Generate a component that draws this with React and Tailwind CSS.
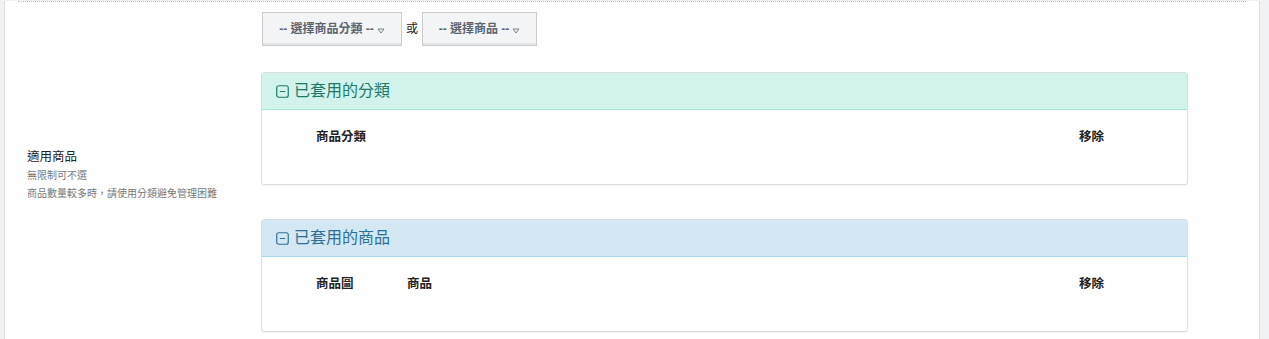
import { useState } from 'react';

const font = { fontFamily: '"Helvetica Neue", "Liberation Sans", "Noto Sans CJK TC", sans-serif' };

function SelectBox({ label, width }) {
  return (
    <div
      className={`${width} h-[34px] flex items-center justify-center gap-[3px] bg-[#f3f4f6] border border-[#c9cbce] shadow-[inset_0_-2px_0_#e2e4e7] text-[12px] font-semibold text-[#5b6570]`}
    >
      <span>{label}</span>
      <svg width="8" height="6" viewBox="0 0 8 6" className="mt-[3px]">
        <path d="M1 1 L7 1 L4 5 Z" fill="none" stroke="#6b7280" strokeWidth="0.9" />
      </svg>
    </div>
  );
}

function MinusBox({ color }) {
  return (
    <svg width="13" height="13" viewBox="0 0 13 13" className="shrink-0">
      <rect x="0.75" y="0.75" width="11.5" height="11.5" rx="2" fill="none" stroke={color} strokeWidth="1.2" />
      <path d="M3.8 6.5 H9.2" stroke={color} strokeWidth="1.2" />
    </svg>
  );
}

function Panel({ title, headBg, headBorder, titleColor, columns }) {
  return (
    <div className="w-[927px] border border-[#dadde1] rounded-[3px] bg-white shadow-[0_1px_1px_rgba(0,0,0,0.05)] overflow-hidden">
      <div className={`h-[37px] flex items-center gap-[5px] pl-[14px] border-b ${headBg} ${headBorder}`}>
        <MinusBox color={titleColor} />
        <span className="text-[16px]" style={{ color: titleColor }}>{title}</span>
      </div>
      <div className="h-[74px] flex pt-[18px] pl-[54px] pr-[83px] text-[12.5px] font-bold text-[#222]">
        <div className="flex-1 flex">
          {columns.map((c, i) => (
            <span key={c} className={i === 0 && columns.length > 1 ? 'w-[91px]' : ''}>{c}</span>
          ))}
        </div>
        <span>移除</span>
      </div>
    </div>
  );
}

export default function App() {
  const [open] = useState(true);

  return (
    <div className="w-[1269px] h-[339px] overflow-hidden bg-[#f1f2f4] pl-[4px] pr-[9px]" style={font}>
      <div className="h-full bg-white border-l border-r border-[#dcdde0] px-[13px]">
        <div className="mt-px border-t border-dotted border-[#bdbdbd]" />
        <div className="flex pt-[10px] pb-[15px]">
          <div className="w-[243px] pl-[9px] self-center pt-[6px]">
            <div className="text-[12.5px] text-[#222] leading-[16px]">適用商品</div>
            <div className="text-[10px] text-[#777] mt-[4px] leading-[14px]">無限制可不選</div>
            <div className="text-[10px] text-[#777] mt-[4px] leading-[14px]">商品數量較多時，請使用分類避免管理困難</div>
          </div>
          <div className="flex flex-col">
            <div className="flex items-center gap-[4px] pl-px">
              <SelectBox label="-- 選擇商品分類 --" width="w-[140px]" />
              <span className="text-[12px] text-[#222]">或</span>
              <SelectBox label="-- 選擇商品 --" width="w-[115px]" />
            </div>
            {open && (
              <div className="flex flex-col gap-[34px] mt-[26px]">
                <Panel
                  title="已套用的分類"
                  headBg="bg-[#d1f3ec]"
                  headBorder="border-[#a6e6d8]"
                  titleColor="#1d7a69"
                  columns={['商品分類']}
                />
                <Panel
                  title="已套用的商品"
                  headBg="bg-[#d3e8f3]"
                  headBorder="border-[#a9d9ea]"
                  titleColor="#2d6f97"
                  columns={['商品圖', '商品']}
                />
              </div>
            )}
          </div>
        </div>
      </div>
    </div>
  );
}
